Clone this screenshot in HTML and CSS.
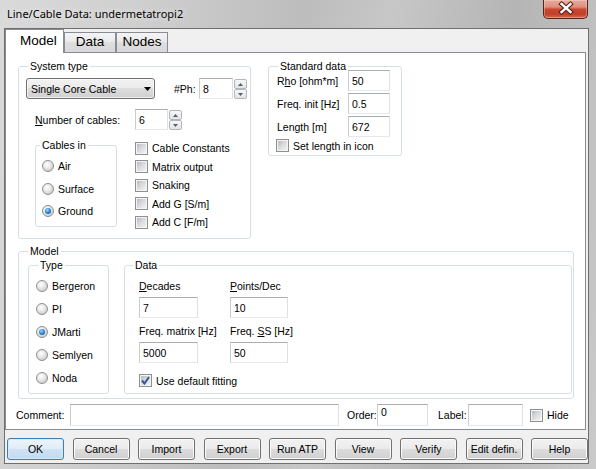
FILE: index.html
```html
<!DOCTYPE html>
<html>
<head>
<meta charset="utf-8">
<title>Line/Cable Data</title>
<link rel="stylesheet" href="styles.css">
</head>
<body>
<div class="window">
  <div class="titlebar">
    <span class="title">Line/Cable Data: undermetatropi2</span>
    <div class="close">
      <svg width="45" height="19" viewBox="0 0 45 19"><path d="M18.5 5 L27.5 13 M27.5 5 L18.5 13" stroke="#4a1a12" stroke-width="4.4" stroke-linecap="square"/><path d="M18.5 5 L27.5 13 M27.5 5 L18.5 13" stroke="#ffffff" stroke-width="2.4" stroke-linecap="square"/></svg>
    </div>
  </div>
  <div class="frame-body">
    <div class="client">
      <div class="tabs">
        <div class="tab active">Model</div>
        <div class="tab inactive">Data</div>
        <div class="tab inactive">Nodes</div>
      </div>
      <div class="panel">
        <div class="top-row">
          <fieldset class="grp sys">
            <legend>System type</legend>
            <div class="row sys-r1">
              <div class="combo"><span>Single Core Cable</span><svg class="dd" width="7" height="4" viewBox="0 0 7 4"><path d="M0 0H7L3.5 4Z" fill="#000"/></svg></div>
              <span class="lbl ph-lbl">#Ph:</span>
              <div class="tb w34">8</div>
              <div class="spin"><span><svg width="5" height="3" viewBox="0 0 5 3"><path d="M0 3L2.5 0L5 3Z" fill="#4f5f80"/></svg></span><span><svg width="5" height="3" viewBox="0 0 5 3"><path d="M0 0L2.5 3L5 0Z" fill="#4f5f80"/></svg></span></div>
            </div>
            <div class="row sys-r2">
              <span class="lbl ncab-lbl"><u>N</u>umber of cables:</span>
              <div class="tb w33">6</div>
              <div class="spin"><span><svg width="5" height="3" viewBox="0 0 5 3"><path d="M0 3L2.5 0L5 3Z" fill="#4f5f80"/></svg></span><span><svg width="5" height="3" viewBox="0 0 5 3"><path d="M0 0L2.5 3L5 0Z" fill="#4f5f80"/></svg></span></div>
            </div>
            <div class="row sys-r3">
              <fieldset class="grp cables">
                <legend>Cables in</legend>
                <div class="radios r-cables">
                  <div class="opt"><span class="rb"></span>Air</div>
                  <div class="opt"><span class="rb"></span>Surface</div>
                  <div class="opt"><span class="rb on"></span>Ground</div>
                </div>
              </fieldset>
              <div class="checks">
                <div class="opt"><span class="cb"></span>Cable Constants</div>
                <div class="opt"><span class="cb"></span>Matrix output</div>
                <div class="opt"><span class="cb"></span>Snaking</div>
                <div class="opt"><span class="cb"></span>Add G [S/m]</div>
                <div class="opt"><span class="cb"></span>Add C [F/m]</div>
              </div>
            </div>
          </fieldset>
          <fieldset class="grp std">
            <legend>Standard data</legend>
            <div class="std-body">
              <div class="row std-row"><span class="lbl std-lbl">R<u>h</u>o [ohm*m]</span><div class="tb w42">50</div></div>
              <div class="row std-row"><span class="lbl std-lbl">Freq. init [Hz]</span><div class="tb w42">0.5</div></div>
              <div class="row std-row"><span class="lbl std-lbl">Length [m]</span><div class="tb w42">672</div></div>
              <div class="opt std-check"><span class="cb"></span>Set length in icon</div>
            </div>
          </fieldset>
        </div>
        <fieldset class="grp model">
          <legend>Model</legend>
          <div class="model-inner">
            <fieldset class="grp type">
              <legend>Type</legend>
              <div class="radios r-type">
                <div class="opt"><span class="rb"></span>Bergeron</div>
                <div class="opt"><span class="rb"></span>PI</div>
                <div class="opt"><span class="rb on"></span>JMarti</div>
                <div class="opt"><span class="rb"></span>Semlyen</div>
                <div class="opt"><span class="rb"></span>Noda</div>
              </div>
            </fieldset>
            <fieldset class="grp data">
              <legend>Data</legend>
              <div class="data-grid">
                <div class="field"><span class="flbl"><u>D</u>ecades</span><div class="tb">7</div></div>
                <div class="field"><span class="flbl"><u>P</u>oints/Dec</span><div class="tb">10</div></div>
                <div class="field f2"><span class="flbl">Freq. matrix [Hz]</span><div class="tb">5000</div></div>
                <div class="field f2"><span class="flbl">Freq. <u>S</u>S [Hz]</span><div class="tb">50</div></div>
              </div>
              <div class="opt fit-check"><span class="cb checked"><svg width="9" height="9" viewBox="0 0 9 9"><path d="M1 4.5 L3.5 7.5 L8 1" fill="none" stroke="#3a539b" stroke-width="2"/></svg></span>Use default fitting</div>
            </fieldset>
          </div>
        </fieldset>
        <div class="comment-row">
          <span class="lbl c-lbl">Comment:</span>
          <div class="tb w269"></div>
          <span class="lbl o-lbl">Order:</span>
          <div class="tb w51 top">0</div>
          <span class="lbl l-lbl">Label:</span>
          <div class="tb w55"></div>
          <div class="opt hide-check"><span class="cb"></span>Hide</div>
        </div>
      </div>
      <div class="buttons">
        <div class="btn default">OK</div>
        <div class="btn">Cancel</div>
        <div class="btn">Import</div>
        <div class="btn">Export</div>
        <div class="btn">Run ATP</div>
        <div class="btn">View</div>
        <div class="btn">Verify</div>
        <div class="btn">Edit defin.</div>
        <div class="btn">Help</div>
      </div>
    </div>
  </div>
</div>
</body>
</html>
```
FILE: styles.css
```css
* { box-sizing: border-box; }
html, body { margin: 0; padding: 0; }
body {
  width: 596px; height: 469px; overflow: hidden;
  font-family: "Liberation Sans", Arial, sans-serif;
  font-size: 10.5px; color: #000; background: #c8c8c8;
}
.window {
  width: 596px; height: 469px; display: flex; flex-direction: column;
  background: linear-gradient(100deg, #dadada 0%, #cecece 22%, #bdbdbd 45%, #c7c7c7 58%, #b5b5b5 76%, #cacaca 100%);
}
.titlebar { height: 28px; display: flex; align-items: flex-start; flex: none; }
.title {
  font-family: "Noto Sans", "Segoe UI", sans-serif; font-size: 11px; line-height: 16px;
  margin: 6px 0 0 7px; color: #000; text-shadow: 0 0 6px rgba(255,255,255,.9);
}
.close {
  margin-left: auto; margin-right: 8px; width: 45px; height: 19px;
  border: 1px solid #5b2219; border-top: 0; border-radius: 0 0 5px 5px;
  background: linear-gradient(#e9a99b 0%, #dd9180 38%, #c9472f 52%, #c13f27 78%, #d46a50 100%);
  box-shadow: inset 0 0 0 1px rgba(255,235,230,.35);
}
.close svg { display: block; margin-top: -1px; margin-left: -1px; }
.frame-body { flex: 1; display: flex; padding: 0 7px 5px 4px; }
.client {
  flex: 1; display: flex; flex-direction: column;
  background: #f0f0f0; border: 1px solid #6f6f6f;
}
.tabs { height: 23px; display: flex; align-items: flex-end; position: relative; z-index: 1; flex: none; }
.tab { font-size: 13.5px; line-height: 16px; border: 1px solid #898c95; border-bottom: 0; }
.tab.active { width: 59px; height: 24px; margin-bottom: -1px; background: #fff; padding: 3px 0 0 14px; }
.tab.inactive {
  width: 52px; height: 20px; text-align: center; padding-top: 1px;
  background: linear-gradient(#f4f4f4, #eaeaea 45%, #dedede 50%, #d8d8d8);
}
.panel {
  height: 378px; margin-right: 2px; background: #fff;
  border: 1px solid #898c95; padding: 7px 0 0 12px; flex: none;
}

/* group boxes */
.grp {
  margin: 0; padding: 0; min-width: 0;
  border: 1px solid #d5dfe5; border-radius: 3px;
}
.grp > legend { padding: 0 2px; margin-left: 9px; line-height: 13px; height: 13px; }

.row { display: flex; align-items: center; }
.lbl { white-space: nowrap; flex: none; }

.top-row { display: flex; align-items: flex-start; }
.sys { width: 233px; height: 179px; }
.std { width: 134px; height: 96px; margin-left: 17px; }

.sys-r1 { margin-top: 5px; padding-left: 7px; height: 21px; align-items: flex-start; }
.sys-r1 .lbl { align-self: center; }
.combo {
  width: 129px; height: 21px; display: flex; align-items: center; padding: 0 3px 0 4px;
  border: 1px solid #707070; border-radius: 3px;
  background: linear-gradient(#f2f2f2 0%, #ebebeb 49%, #dddddd 50%, #cfcfcf 100%);
  box-shadow: inset 0 0 0 1px rgba(255,255,255,.7);
}
.combo .dd { margin-left: auto; }
.ph-lbl { margin-left: 19px; width: 25px; }
.sys-r2 { margin-top: 10px; padding-left: 16px; height: 21px; align-items: flex-start; }
.sys-r2 .lbl { align-self: center; }
.ncab-lbl { width: 100px; }
.sys-r3 { margin-top: 9px; padding-left: 16px; align-items: flex-start; }

.cables { width: 82px; height: 88px; }
.cables > legend { margin-left: 4px; }
.r-cables { margin-top: 3px; padding-left: 6px; }
.r-cables .opt { height: 22.5px; }
.checks { margin-left: 18px; }
.checks .opt { height: 18.5px; }

.opt { display: flex; align-items: center; white-space: nowrap; }

/* text box */
.tb {
  height: 21px; background: #fff; padding: 0 3px; display: flex; align-items: center;
  border: 1px solid; border-color: #abadb3 #dbdfe6 #e3e9ef #c9ccd3; flex: none;
}
.tb.top { align-items: flex-start; padding-top: 1px; }
.w34 { width: 34px; }
.w33 { width: 33px; }
.w42 { width: 42px; }
.w269 { width: 269px; }
.w51 { width: 51px; }
.w55 { width: 55px; }

/* spinner */
.spin { width: 13px; height: 20px; margin: 1px 0 0 1px; display: flex; flex-direction: column; flex: none; }
.spin span {
  flex: 1; display: flex; align-items: center; justify-content: center;
  border: 1px solid #b3b6bb; border-radius: 2px;
  background: linear-gradient(#f7f7f7, #e4e4e4);
}
.spin svg { display: block; }

/* checkbox */
.cb {
  width: 13px; height: 13px; flex: none; margin-right: 4px;
  border: 1px solid #8e8f8f; padding: 1px; background: #f4f4f4; position: relative;
}
.cb::before {
  content: ""; display: block; width: 100%; height: 100%;
  background: linear-gradient(135deg, #b6babf 0%, #d8d9db 45%, #f3f3f3 100%);
}
.cb.checked svg { position: absolute; left: 1px; top: 1px; }

/* radio */
.rb {
  width: 12px; height: 12px; border-radius: 50%; flex: none; margin-right: 4px;
  border: 1px solid #8e8f8f;
  background: radial-gradient(circle at 40% 35%, #ffffff 0%, #ececec 35%, #cfcfcf 75%, #bdbdbd 100%);
  position: relative;
}
.rb.on::after {
  content: ""; position: absolute; left: 2px; top: 2px; width: 6px; height: 6px; border-radius: 50%;
  background: radial-gradient(circle at 40% 35%, #9fe0ff 0%, #2e8be0 45%, #0c3f86 100%);
}

/* standard data */
.std > legend { margin-left: 9px; }
.std-body { padding-left: 8px; margin-top: -3px; }
.std-row { height: 21px; margin-bottom: 2px; }
.std-lbl { width: 71px; }
.std-check { margin-top: 2px; margin-left: -1px; height: 13px; }

/* model */
.model { width: 556px; height: 154px; margin-top: 6px; }
.model-inner { display: flex; margin-top: 1px; align-items: flex-start; }
.type { width: 81px; height: 135px; margin-left: 9px; }
.r-type { margin-top: 2.5px; padding-left: 7px; }
.r-type .opt { height: 23px; }
.data { width: 448px; height: 135px; margin-left: 15px; }
.data > legend { margin-left: 8px; }
.data-grid {
  display: grid; grid-template-columns: 59px 58px; column-gap: 32px;
  margin-top: 8px; padding-left: 14px;
}
.field { display: flex; flex-direction: column; }
.field.f2 { margin-top: 7px; }
.flbl { height: 13px; line-height: 13px; white-space: nowrap; }
.field .tb { margin-top: 4px; width: 100%; }
.fit-check { margin-top: 11px; margin-left: 14px; height: 13px; }

/* comment row */
.comment-row { display: flex; align-items: center; margin-top: 5px; margin-left: -2px; height: 22px; }
.comment-row .tb { height: 22px; }
.c-lbl { width: 54px; }
.o-lbl { width: 30px; margin-left: 8px; }
.l-lbl { width: 30px; margin-left: 10px; }
.hide-check { margin-left: 7px; }

/* buttons */
.buttons {
  display: flex; justify-content: space-between; margin-top: 8px; height: 22px;
  padding-left: 2px; flex: none;
}
.btn {
  width: 57px; height: 22px; display: flex; align-items: center; justify-content: center;
  border: 1px solid #707070; border-radius: 3px;
  background: linear-gradient(#f2f2f2 0%, #ebebeb 49%, #dddddd 50%, #cfcfcf 100%);
  box-shadow: inset 0 0 0 1px #fbfbfb; white-space: nowrap;
}
.btn.default {
  border-color: #3c7fb1;
  background: linear-gradient(#eef5fb 0%, #e0ecf7 49%, #cfe2f3 50%, #c3dbf0 100%);
  box-shadow: inset 0 0 0 1px #d5eaf8;
}
```
